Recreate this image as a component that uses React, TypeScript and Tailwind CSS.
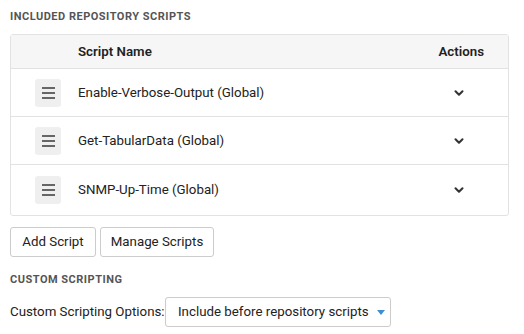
import { ChevronDown } from "lucide-react"

const scripts = [
  "Enable-Verbose-Output (Global)",
  "Get-TabularData (Global)",
  "SNMP-Up-Time (Global)",
]

function Handle() {
  return (
    <div className="w-[26px] h-[28px] rounded-[3px] bg-[#efefef] flex flex-col items-center justify-center gap-[3px]">
      <span className="block w-[13px] h-[2px] bg-[#666]" />
      <span className="block w-[13px] h-[2px] bg-[#666]" />
      <span className="block w-[13px] h-[2px] bg-[#666]" />
    </div>
  )
}

export default function App() {
  return (
    <div className="w-[524px] h-[334px] bg-white px-[10px] pt-[10px] text-[13.3px] text-[#222] font-['Roboto',sans-serif]">
      <div className="text-[11px] font-bold tracking-[0.5px] text-[#555] leading-[14px] h-[14px]">
        INCLUDED REPOSITORY SCRIPTS
      </div>
      <div className="mt-[10px] w-[499px] border border-[#e2e2e2] rounded-[3px]">
        <div className="flex items-center h-[34px] bg-[#f6f6f6] border-b border-[#e2e2e2] font-semibold">
          <div className="w-[67px]" />
          <div className="flex-1">Script Name</div>
          <div className="pr-[24px]">Actions</div>
        </div>
        {scripts.map((s, i) => (
          <div
            key={s}
            className={`flex items-center ${i < scripts.length - 1 ? "h-[48px] border-b border-[#e2e2e2]" : "h-[50px]"}`}
          >
            <div className="w-[67px] pl-[24px]">
              <Handle />
            </div>
            <div className="flex-1">{s}</div>
            <div className="w-[60px] pr-[42px] flex justify-end">
              <ChevronDown size={14} strokeWidth={3.5} className="text-[#333]" />
            </div>
          </div>
        ))}
      </div>
      <div className="mt-[11px] flex gap-[4px]">
        <button className="h-[30px] w-[86px] border border-[#ccc] rounded-[3px] bg-white">Add Script</button>
        <button className="h-[30px] w-[114px] border border-[#ccc] rounded-[3px] bg-white">Manage Scripts</button>
      </div>
      <div className="mt-[16px] h-[14px] text-[11px] font-bold tracking-[0.5px] text-[#555] leading-[14px]">
        CUSTOM SCRIPTING
      </div>
      <div className="mt-[10px] flex items-center">
        <span className="w-[155px] whitespace-nowrap">Custom Scripting Options:</span>
        <div className="h-[30px] w-[226px] border border-[#ccc] rounded-[3px] flex items-center pl-[12px] gap-[8px] whitespace-nowrap">
          <span>Include before repository scripts</span>
          <svg width="8" height="5" viewBox="0 0 8 5">
            <path d="M0 0 L8 0 L4 5 Z" fill="#3d8fd1" />
          </svg>
        </div>
      </div>
    </div>
  )
}
